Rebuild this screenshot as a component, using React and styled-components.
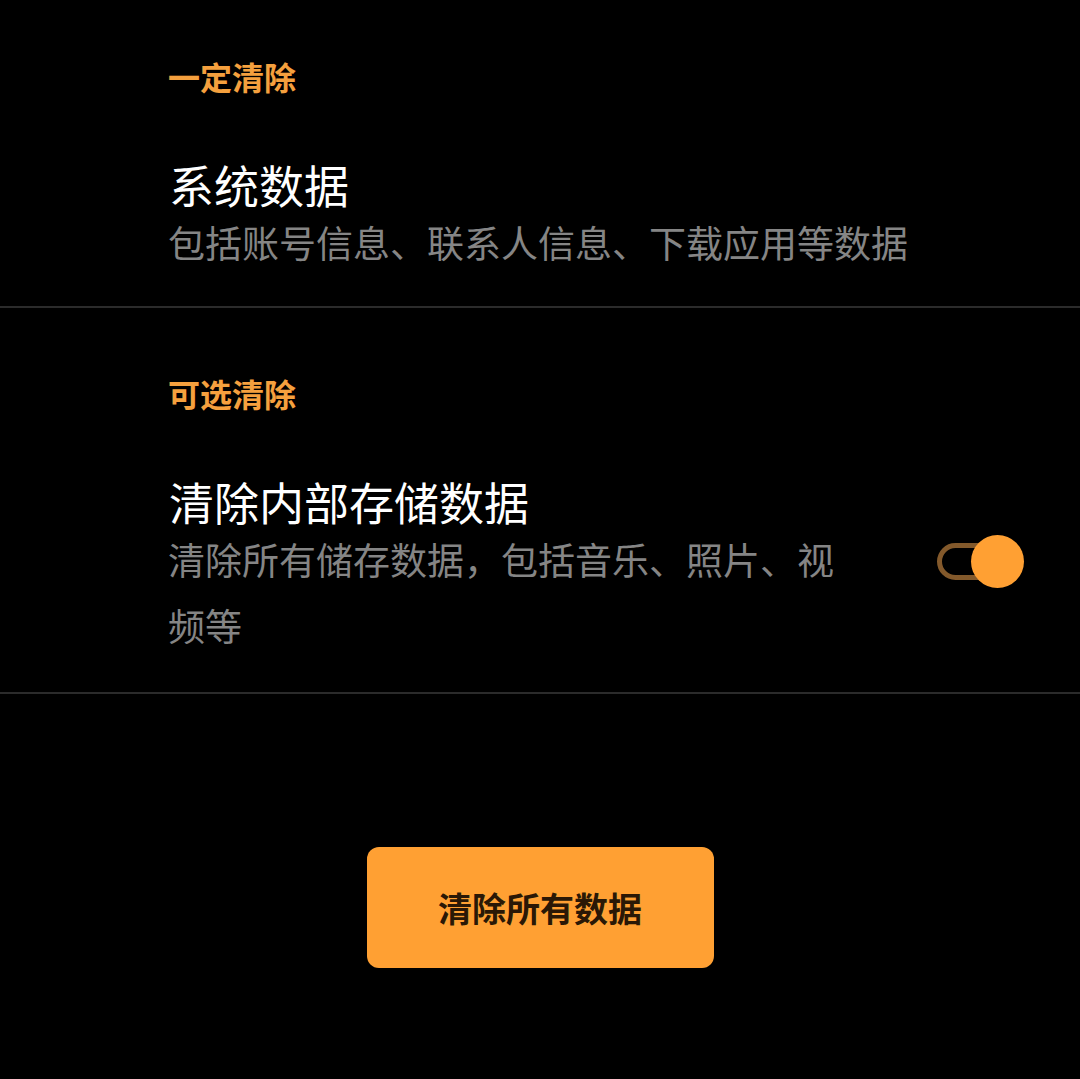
import styled, { createGlobalStyle } from 'styled-components'
import { useState } from 'react'

const GlobalStyle = createGlobalStyle`
    html, body {
        margin: 0;
        padding: 0;
        background: #000;
    }
    body {
        font-family: "Noto Sans CJK SC", "Noto Sans", sans-serif;
        -webkit-font-smoothing: antialiased;
    }
`

const App = () => {
    const [wipeStorage, setWipeStorage] = useState(true)

    return (
        <>
            <GlobalStyle />
            <Page>
                <SectionHeader>一定清除</SectionHeader>
                <Row $bottom={31}>
                    <TextCol>
                        <Title>系统数据</Title>
                        <Sub>包括账号信息、联系人信息、下载应用等数据</Sub>
                    </TextCol>
                </Row>

                <SectionHeader>可选清除</SectionHeader>
                <Row $bottom={34}>
                    <TextCol $narrow>
                        <Title>清除内部存储数据</Title>
                        <Sub>清除所有储存数据，包括音乐、照片、视频等</Sub>
                    </TextCol>
                    <Toggle $on={wipeStorage} onClick={() => setWipeStorage(!wipeStorage)}>
                        <Track $on={wipeStorage} />
                        <Thumb $on={wipeStorage} />
                    </Toggle>
                </Row>

                <ButtonWrap>
                    <ClearButton>清除所有数据</ClearButton>
                </ButtonWrap>
            </Page>
        </>
    )
}

const Page = styled.div`
    width: 1080px;
    min-height: 1079px;
    background: #000;
    padding-top: 56px;
    box-sizing: border-box;
`

const SectionHeader = styled.div`
    padding: 0 0 0 168px;
    height: 40px;
    line-height: 40px;
    font-size: 32px;
    font-weight: 700;
    color: #f5a03e;
`

const Row = styled.div`
    display: flex;
    align-items: center;
    padding: 65px 56px ${p => p.$bottom}px 169px;
    border-bottom: 2px solid #2b2b2b;
    margin-bottom: 65px;
`

const TextCol = styled.div`
    display: flex;
    flex-direction: column;
    flex: 1;
    max-width: ${p => (p.$narrow ? '690px' : 'none')};
    margin-right: auto;
`

const Title = styled.div`
    font-size: 45px;
    line-height: 48px;
    color: #fff;
`

const Sub = styled.div`
    font-size: 37px;
    line-height: 66px;
    color: #858585;
    margin-left: -1px;
`

const Toggle = styled.div`
    position: relative;
    width: 87px;
    height: 53px;
    flex-shrink: 0;
    margin-bottom: 14px;
    cursor: pointer;
`

const Track = styled.div`
    position: absolute;
    left: 0;
    top: 8px;
    width: 64px;
    height: 37px;
    box-sizing: border-box;
    border: 5px solid ${p => (p.$on ? '#83592b' : '#555')};
    border-radius: 19px;
`

const Thumb = styled.div`
    position: absolute;
    top: 0;
    left: ${p => (p.$on ? '34px' : '0')};
    width: 53px;
    height: 53px;
    border-radius: 50%;
    background: ${p => (p.$on ? '#ffa033' : '#999')};
`

const ButtonWrap = styled.div`
    display: flex;
    justify-content: center;
    padding-top: 88px;
`

const ClearButton = styled.button`
    width: 347px;
    height: 121px;
    border: none;
    border-radius: 12px;
    background: #ffa033;
    color: #2a1806;
    font-family: "Noto Sans CJK SC", "Noto Sans", sans-serif;
    font-size: 34px;
    font-weight: 700;
    padding: 0;
    cursor: pointer;
`

export default App
